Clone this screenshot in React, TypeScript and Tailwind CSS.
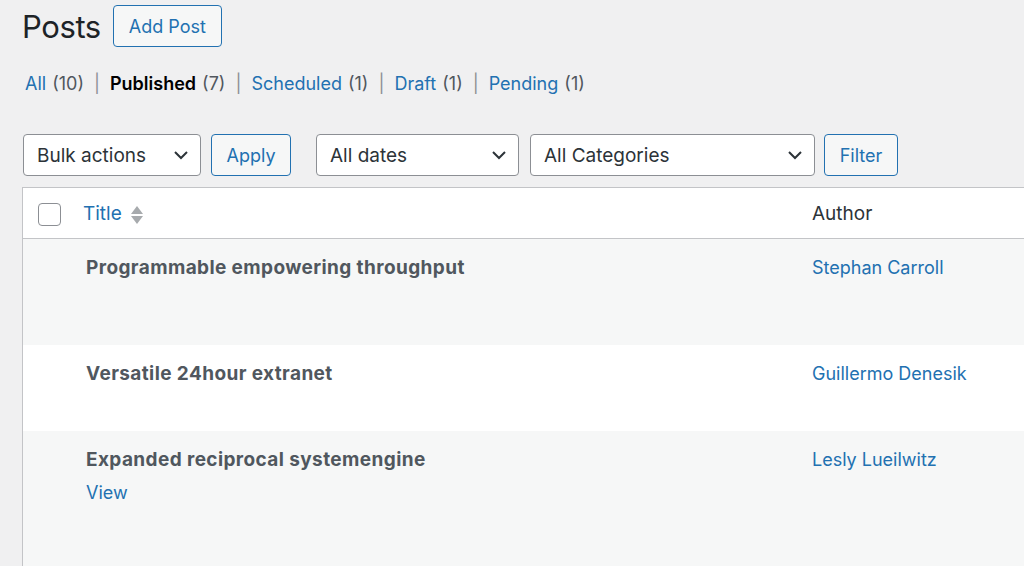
import React from "react";

const font = { fontFamily: "Inter, 'Noto Sans', 'Liberation Sans', sans-serif" };

function Chevron() {
  return (
    <svg width="16" height="10" viewBox="0 0 16 10" className="shrink-0">
      <polyline points="2,2 8,8 14,2" fill="none" stroke="#2c3338" strokeWidth="2" />
    </svg>
  );
}

function SelectBox({ label, width }: { label: string; width: string }) {
  return (
    <div
      className={`${width} h-[42px] flex items-center justify-between pl-[13px] pr-[11px] bg-white border border-[#8c8f94] rounded-[4px] text-[19px] text-[#2c3338]`}
    >
      <span className="pt-[3px]">{label}</span>
      <Chevron />
    </div>
  );
}

function SecondaryButton({ label, width }: { label: string; width: string }) {
  return (
    <div
      className={`${width} h-[42px] flex items-center justify-center bg-[#f6f7f7] border border-[#2271b1] rounded-[4px] text-[18px] text-[#2271b1]`}
    >
      <span className="pt-[1px]">{label}</span>
    </div>
  );
}

const statuses = [
  { label: "All", count: 10, current: false },
  { label: "Published", count: 7, current: true },
  { label: "Scheduled", count: 1, current: false },
  { label: "Draft", count: 1, current: false },
  { label: "Pending", count: 1, current: false },
];

const posts = [
  { title: "Programmable empowering throughput", author: "Stephan Carroll", height: "h-[106px]", bg: "bg-[#f6f7f7]", view: false },
  { title: "Versatile 24hour extranet", author: "Guillermo Denesik", height: "h-[86px]", bg: "bg-white", view: false },
  { title: "Expanded reciprocal systemengine", author: "Lesly Lueilwitz", height: "h-[140px]", bg: "bg-[#f6f7f7]", view: true },
];

export default function App() {
  return (
    <div className="w-[1024px] h-[566px] overflow-hidden bg-[#f0f0f1]" style={font}>
      <div className="pl-[22px]">
        {/* Heading */}
        <div className="flex items-center h-[52px] pt-[5px] pb-[5px]">
          <h1 className="text-[31px] leading-none text-[#1d2327] mr-[12px] tracking-[-0.4px]">Posts</h1>
          <SecondaryButton label="Add Post" width="w-[109px]" />
        </div>

        {/* Status links */}
        <div className="flex items-center h-[24px] mt-[19px] pl-[3px] text-[18px] text-[#50575e]">
          {statuses.map((s, i) => (
            <span key={s.label} className="flex items-center">
              {i > 0 && <span className="mx-[10px] text-[#8c8f94]">|</span>}
              <span className={s.current ? "font-semibold text-[#000]" : "text-[#2271b1]"}>{s.label}</span>
              <span className="ml-[6px]">({s.count})</span>
            </span>
          ))}
        </div>

        {/* Toolbar */}
        <div className="flex items-center mt-[39px] pl-[1px]">
          <SelectBox label="Bulk actions" width="w-[178px]" />
          <div className="ml-[10px]">
            <SecondaryButton label="Apply" width="w-[80px]" />
          </div>
          <div className="ml-[25px]">
            <SelectBox label="All dates" width="w-[203px]" />
          </div>
          <div className="ml-[11px]">
            <SelectBox label="All Categories" width="w-[285px]" />
          </div>
          <div className="ml-[9px]">
            <SecondaryButton label="Filter" width="w-[74px]" />
          </div>
        </div>

        {/* Table */}
        <div className="mt-[11px] w-[1100px] border border-[#c3c4c7] bg-white">
          <div className="flex items-center h-[51px] border-b border-[#c3c4c7]">
            <div className="w-[60px] pl-[15px] pt-[3px]">
              <div className="w-[23px] h-[23px] rounded-[4px] border border-[#8c8f94] bg-white shrink-0" />
            </div>
            <div className="w-[729px] flex items-center gap-[9px] pt-[3px]">
              <span className="text-[19px] text-[#2271b1]">Title</span>
              <svg width="12" height="20" viewBox="0 0 12 20">
                <polygon points="6,1 12,9 0,9" fill="#a7aaad" />
                <polygon points="0,11 12,11 6,19" fill="#a7aaad" />
              </svg>
            </div>
            <span className="text-[19px] text-[#2c3338] pt-[3px]">Author</span>
          </div>
          {posts.map((p) => (
            <div key={p.title} className={`flex ${p.height} ${p.bg}`}>
              <div className="w-[63px]" />
              <div className="w-[726px] pt-[17px]">
                <div className="text-[19px] leading-[24px] font-bold tracking-[0.4px] text-[#50575e]">{p.title}</div>
                {p.view && <div className="mt-[9px] text-[18px] leading-[24px] text-[#2271b1]">View</div>}
              </div>
              <div className="pt-[17px] text-[18px] leading-[24px] text-[#2271b1]">{p.author}</div>
            </div>
          ))}
        </div>
      </div>
    </div>
  );
}
